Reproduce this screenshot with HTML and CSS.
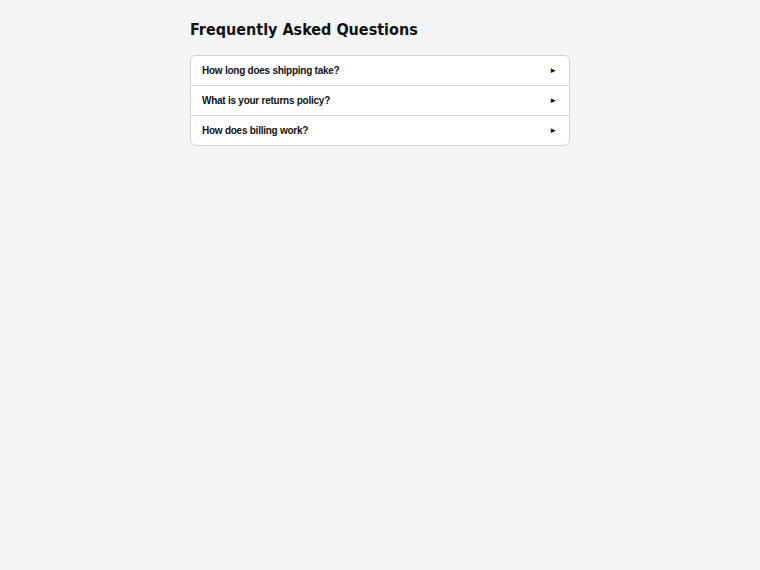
FILE: index.html
```html
<!DOCTYPE html>
<html lang="en">
<head>
  <meta charset="UTF-8" />
  <title>FAQ</title>
  <link rel="stylesheet" href="styles.css">
</head>
<body>
  <main class="faq">
    <h1>Frequently Asked Questions</h1>
    <div class="faq-list">
      <details class="faq-item">
        <summary>How long does shipping take?</summary>
      </details>
      <details class="faq-item">
        <summary>What is your returns policy?</summary>
      </details>
      <details class="faq-item">
        <summary>How does billing work?</summary>
      </details>
    </div>
  </main>
</body>
</html>
```

FILE: styles.css
```css
body {
  background: #f3f4f6;
  color: #111;
  font-family: 'Liberation Sans', Arial, sans-serif;
  margin: 0;
}
.faq {
  width: 380px;
  margin: 0 auto;
  padding: 20px 0;
}
.faq h1 {
  font-family: 'DejaVu Sans Condensed', 'DejaVu Sans', sans-serif;
  font-size: 16px;
  line-height: 19px;
  margin: 0 0 16px;
  color: #111;
}
.faq-list {
  background: #fff;
  border: 1px solid #d4d4d8;
  border-radius: 6px;
  overflow: hidden;
}
.faq-item + .faq-item {
  border-top: 1px solid #d4d4d8;
}
.faq-item summary {
  list-style: none;
  display: flex;
  justify-content: space-between;
  align-items: center;
  padding: 8px 12px 8px 11px;
  font-size: 10px;
  font-weight: bold;
  line-height: 13px;
  letter-spacing: -0.25px;
  cursor: pointer;
}
.faq-item summary::-webkit-details-marker {
  display: none;
}
.faq-item summary::after {
  content: "►";
  font-size: 8px;
}
```
